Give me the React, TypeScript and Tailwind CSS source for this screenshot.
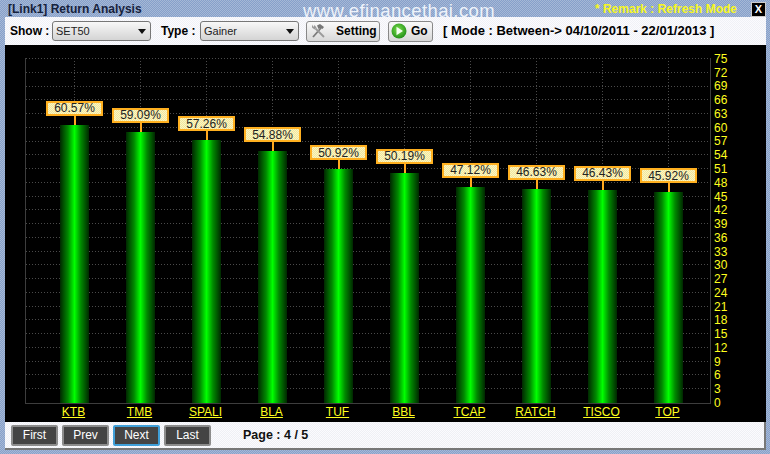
const data = [
  { name: "KTB", value: 60.57 },
  { name: "TMB", value: 59.09 },
  { name: "SPALI", value: 57.26 },
  { name: "BLA", value: 54.88 },
  { name: "TUF", value: 50.92 },
  { name: "BBL", value: 50.19 },
  { name: "TCAP", value: 47.12 },
  { name: "RATCH", value: 46.63 },
  { name: "TISCO", value: 46.43 },
  { name: "TOP", value: 45.92 },
];

const ticks = Array.from({ length: 26 }, (_, i) => 75 - i * 3);

const Arrow = () => (
  <svg width="8" height="5" viewBox="0 0 8 5" className="shrink-0">
    <path d="M0 0h8L4 5z" fill="#111" />
  </svg>
);

const Select = ({ value }: { value: string }) => (
  <div className="flex h-[20px] w-[99px] items-center justify-between rounded-[3px] border border-[#777] bg-gradient-to-b from-[#f8f8f8] to-[#d4d4d4] pl-[3px] pr-[4px] text-[11px] font-normal text-[#222]">
    <span>{value}</span>
    <Arrow />
  </div>
);

const ToolsIcon = () => (
  <svg width="17" height="16" viewBox="0 0 17 16" fill="none">
    <path d="M3 14L11 5" stroke="#7a7a7a" strokeWidth="1.8" />
    <path d="M7 2.5L10 1l4 3-1.5 2-2-1-2 1z" fill="#777" />
    <path d="M14 14L5.5 5.5" stroke="#9b9b9b" strokeWidth="1.8" />
    <path d="M2 1.5L2 4.5 4.5 6.5 6.5 4.5 4.5 2 3.5 4z" fill="#9a9a9a" />
  </svg>
);

const GoIcon = () => (
  <svg width="16" height="16" viewBox="0 0 16 16">
    <defs>
      <radialGradient id="go" cx="45%" cy="40%" r="65%">
        <stop offset="0%" stopColor="#7be04a" />
        <stop offset="100%" stopColor="#1c8a16" />
      </radialGradient>
    </defs>
    <circle cx="8" cy="8" r="7.5" fill="url(#go)" />
    <path d="M5.5 3.8L12 8l-6.5 4.2z" fill="#f4fff0" />
  </svg>
);

const PagerButton = ({ label, active }: { label: string; active?: boolean }) => (
  <div
    className={`flex h-[21px] w-[47px] items-center justify-center rounded-[2px] border-2 bg-[#444] text-[12px] text-white ${
      active ? "border-[#3f9fd8]" : "border-[#8c8c8c]"
    }`}
  >
    {label}
  </div>
);

const GridLines = () => (
  <svg className="absolute inset-0 h-full w-full" width="685" height="345">
    {ticks.slice(0, 25).map((t, i) => (
      <line key={t} x1="0" x2="685" y1={Math.round(i * 13.76) + 0.5} y2={Math.round(i * 13.76) + 0.5} stroke="#4a4a4a" strokeDasharray="1 2" />
    ))}
    {data.map((d, i) => (
      <line key={d.name} x1={48.5 + i * 66} x2={48.5 + i * 66} y1="0" y2="345" stroke="#4a4a4a" strokeDasharray="1 2" />
    ))}
  </svg>
);

export default function App() {
  return (
    <div
      className="relative flex h-[454px] w-[770px] flex-col overflow-hidden bg-[repeating-conic-gradient(#86a0ca_0_25%,#a6b8d6_0_50%)] bg-[length:2px_2px] pb-[4px] pl-[5px] pr-[4px] text-[12px]"
      style={{ fontFamily: '"Liberation Sans", Arial, sans-serif' }}
    >
      {/* title bar */}
      <div className="flex h-[17px] shrink-0 items-center justify-between text-[12px] font-bold">
        <span className="pl-[3px] text-[#16223c]">[Link1] Return Analysis</span>
        <div className="flex items-center">
          <span className="mr-[14px] text-[#f7f71e]">* Remark : Refresh Mode</span>
          <div className="mt-[2px] flex h-[15px] w-[15px] items-center justify-center border border-[#ccc] bg-black text-[11px] text-white">
            X
          </div>
        </div>
      </div>
      <span className="absolute left-[303px] top-[-3px] text-[18.5px] tracking-[0.4px] text-[#eef3fa]">www.efinancethai.com</span>

      {/* toolbar */}
      <div className="flex h-[28px] shrink-0 items-center bg-[repeating-conic-gradient(#fbfbfe_0_25%,#f0f1f6_0_50%)] bg-[length:2px_2px] pl-[5px] text-[12px] font-bold text-black">
        <span className="w-[42px]">Show :</span>
        <Select value="SET50" />
        <span className="ml-[10px] w-[39px]">Type :</span>
        <Select value="Gainer" />
        <div className="ml-[7px] flex h-[21px] w-[74px] items-center gap-[9px] rounded-[3px] border border-[#888] bg-gradient-to-b from-[#fafafa] to-[#d8d8d8] pl-[3px]">
          <ToolsIcon />
          <span>Setting</span>
        </div>
        <div className="ml-[8px] flex h-[21px] w-[45px] items-center gap-[4px] rounded-[3px] border border-[#888] bg-gradient-to-b from-[#fafafa] to-[#d8d8d8] pl-[2px]">
          <GoIcon />
          <span>Go</span>
        </div>
        <span className="ml-[10px] text-[13px] font-bold">[ Mode : Between-&gt; 04/10/2011 - 22/01/2013 ]</span>
      </div>

      {/* chart */}
      <div className="flex h-[377px] shrink-0 flex-col bg-black pl-[20px] pt-[13px] text-[#ffff1e]">
        <div className="flex">
          <div className="relative h-[346px] w-[686px] border-b border-l border-r border-[#3d3d3d]">
            <GridLines />
            <div className="absolute inset-0 flex items-end pl-[15.5px]">
              {data.map((d) => (
                <div key={d.name} className="flex w-[66px] flex-col items-center">
                  <div className="flex h-[15px] w-[57px] items-center justify-center border-2 border-[#ffb020] bg-[repeating-conic-gradient(#fdf6c0_0_25%,#efe5a0_0_50%)] bg-[length:2px_2px] text-[12px] text-[#222]">
                    {d.value.toFixed(2)}%
                  </div>
                  <div className="ml-[1px] h-[9px] w-[2px] bg-[#ffa820]" />
                  <div
                    className="w-[29px] bg-[linear-gradient(to_right,#002800,#008a00_28%,#00ff00_50%,#008a00_72%,#002800)]"
                    style={{ height: d.value * 4.59 }}
                  />
                </div>
              ))}
            </div>
          </div>
          <div className="-mb-[13px] -mt-[6px] ml-[3px] flex h-[358px] flex-col text-[12px]">
            {ticks.map((t) => (
              <span key={t} className="flex h-[13.77px] items-center leading-none">
                {t}
              </span>
            ))}
          </div>
        </div>
        <div className="flex w-[686px] pl-[15.5px]">
          {data.map((d) => (
            <span key={d.name} className="w-[66px] text-center text-[12px] leading-[17px] underline">
              {d.name}
            </span>
          ))}
        </div>
      </div>

      {/* pager */}
      <div className="flex min-h-0 flex-1 items-center gap-[4px] border-b-2 border-r-2 border-[#777] bg-[repeating-conic-gradient(#fbfbfe_0_25%,#eff0f5_0_50%)] bg-[length:2px_2px] pl-[6px]">
        <PagerButton label="First" />
        <PagerButton label="Prev" />
        <PagerButton label="Next" active />
        <PagerButton label="Last" />
        <span className="ml-[28px] text-[12.5px] font-bold text-[#111]">Page : 4 / 5</span>
      </div>
    </div>
  );
}
